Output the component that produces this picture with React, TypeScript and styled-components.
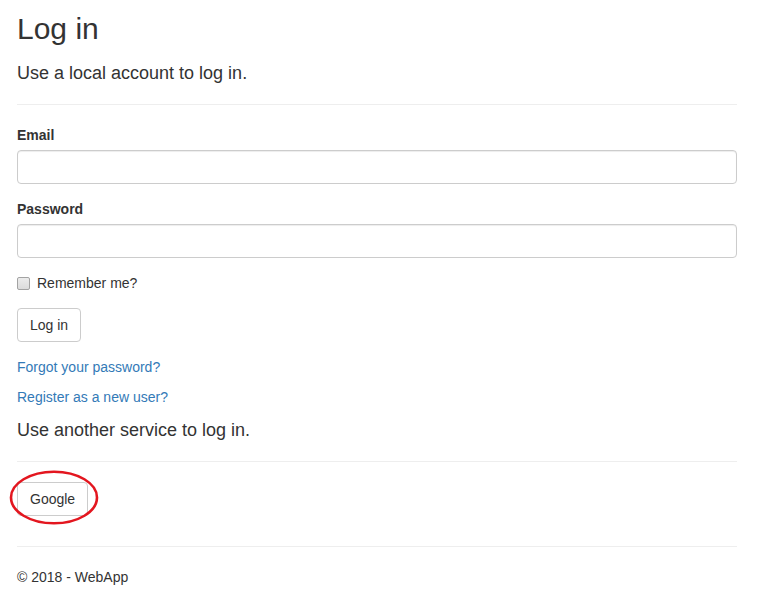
import React from "react";
import styled, { createGlobalStyle } from "styled-components";

const GlobalStyle = createGlobalStyle`
  html, body {
    margin: 0;
    padding: 0;
    background: #fff;
  }
  body {
    font-family: "Liberation Sans", Arial, Helvetica, sans-serif;
    font-size: 14px;
    line-height: 1.42857143;
    color: #333;
  }
  * { box-sizing: border-box; }
`;

const Page = styled.div`
  padding: 0 23px 0 17px;
`;

const Title = styled.h2`
  margin: 12px 0 10px;
  font-size: 30px;
  font-weight: 500;
  line-height: 1.1;
`;

const SectionHeading = styled.h4<{ $top: number }>`
  margin: ${(p) => p.$top}px 0 10px;
  font-size: 18px;
  font-weight: 500;
  line-height: 1.1;
`;

const Divider = styled.hr`
  margin: 20px 0;
  border: 0;
  border-top: 1px solid #eee;
  height: 0;
`;

const FormGroup = styled.div`
  margin-bottom: 15px;
`;

const FieldLabel = styled.label`
  display: inline-block;
  margin-bottom: 5px;
  font-weight: 700;
`;

const TextInput = styled.input`
  display: block;
  width: 100%;
  height: 34px;
  padding: 6px 12px;
  font-size: 14px;
  font-family: inherit;
  line-height: 1.42857143;
  color: #555;
  background: #fff;
  border: 1px solid #ccc;
  border-radius: 4px;
  box-shadow: inset 0 1px 1px rgba(0, 0, 0, 0.075);
  outline: none;
`;

const CheckRow = styled.label`
  display: flex;
  align-items: flex-start;
  min-height: 20px;
  font-weight: 400;
  cursor: pointer;
`;

const CheckBox = styled.input`
  appearance: none;
  -webkit-appearance: none;
  width: 13px;
  height: 13px;
  margin: 4px 7px 0 0;
  border: 1px solid #a3a3a3;
  border-radius: 2px;
  background: linear-gradient(#ececec, #dcdcdc);
  flex: none;
`;

const Button = styled.button`
  display: inline-block;
  padding: 6px 12px;
  font-family: inherit;
  font-size: 14px;
  line-height: 1.42857143;
  color: #333;
  background: #fff;
  border: 1px solid #ccc;
  border-radius: 4px;
  cursor: pointer;
`;

const LinkPara = styled.p`
  margin: 0 0 10px;
`;

const Link = styled.a`
  color: #337ab7;
  text-decoration: none;
`;

const ProviderRow = styled.div`
  display: flex;
  margin-bottom: 30px;
`;

const Highlight = styled.div`
  position: relative;
  display: inline-flex;
`;

const Ring = styled.svg`
  position: absolute;
  left: -9.5px;
  top: -12.5px;
  width: 92px;
  height: 57px;
  pointer-events: none;
  overflow: visible;
`;

const Footer = styled.footer`
  p {
    margin: 0 0 10px;
  }
`;

export default function App() {
  return (
    <>
      <GlobalStyle />
      <Page>
        <Title>Log in</Title>
        <SectionHeading $top={19}>Use a local account to log in.</SectionHeading>
        <Divider />
        <FormGroup>
          <FieldLabel htmlFor="email">Email</FieldLabel>
          <TextInput id="email" type="email" />
        </FormGroup>
        <FormGroup>
          <FieldLabel htmlFor="password">Password</FieldLabel>
          <TextInput id="password" type="password" />
        </FormGroup>
        <FormGroup>
          <CheckRow>
            <CheckBox type="checkbox" />
            Remember me?
          </CheckRow>
        </FormGroup>
        <FormGroup>
          <Button type="button">Log in</Button>
        </FormGroup>
        <LinkPara>
          <Link href="#">Forgot your password?</Link>
        </LinkPara>
        <LinkPara>
          <Link href="#">Register as a new user?</Link>
        </LinkPara>
        <SectionHeading $top={14}>Use another service to log in.</SectionHeading>
        <Divider />
        <ProviderRow>
          <Highlight>
            <Button type="button">Google</Button>
            <Ring viewBox="0 0 92 57">
              <ellipse cx="46" cy="28.5" rx="43" ry="25.8" fill="none" stroke="#e3161f" strokeWidth="2.6" />
            </Ring>
          </Highlight>
        </ProviderRow>
        <Divider />
        <Footer>
          <p>© 2018 - WebApp</p>
        </Footer>
      </Page>
    </>
  );
}
